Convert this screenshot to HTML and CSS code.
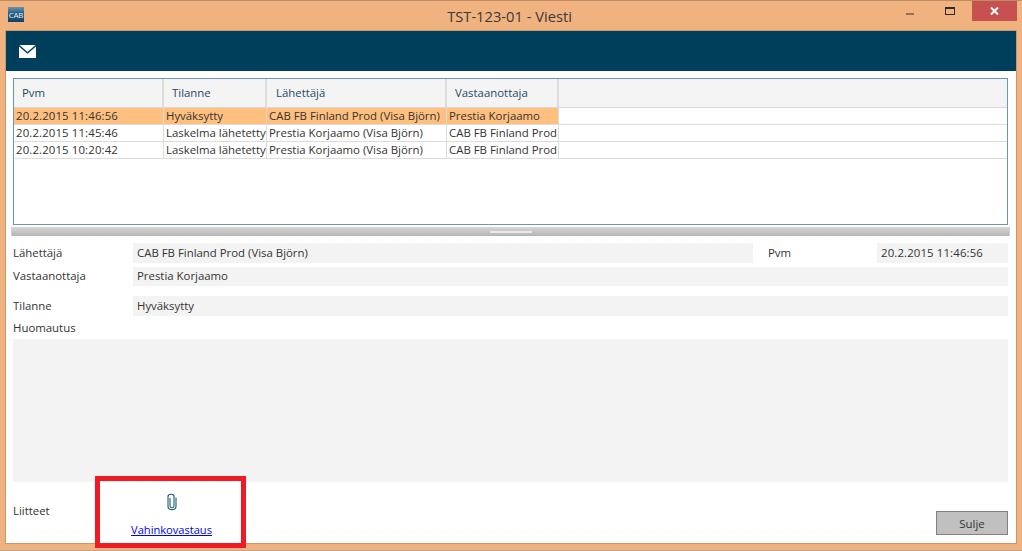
FILE: index.html
```html
<!DOCTYPE html>
<html lang="en">
<head>
  <meta charset="UTF-8">
  <title>TST-123-01 - Viesti</title>
  <link rel="stylesheet" href="styles.css">
</head>
<body>
  <div class="window">
    <div class="titlebar">
      <div class="logo">CAB</div>
      <div class="title">TST-123-01 - Viesti</div>
      <div class="controls">
        <div class="min"><span></span></div>
        <div class="max"><span></span></div>
        <div class="close">
          <svg width="9" height="8" viewBox="0 0 9 8"><path d="M1 0.5 L8 7.5 M8 0.5 L1 7.5" stroke="#fff" stroke-width="2"/></svg>
        </div>
      </div>
    </div>

    <div class="content">
      <div class="header">
        <svg width="17" height="13" viewBox="0 0 17 13">
          <path d="M0.5 0 H16.5 L8.5 7 Z" fill="#fff"/>
          <path d="M0 1.5 L8.5 8.8 L17 1.5 V13 H0 Z" fill="#fff"/>
        </svg>
      </div>

      <div class="grid">
        <div class="row head">
          <div class="col c1">Pvm</div>
          <div class="col c2">Tilanne</div>
          <div class="col c3">Lähettäjä</div>
          <div class="col c4">Vastaanottaja</div>
          <div class="col c5"></div>
        </div>
        <div class="row selected">
          <div class="col c1 stamp">20.2.2015 11:46:56</div>
          <div class="col c2">Hyväksytty</div>
          <div class="col c3">CAB FB Finland Prod (Visa Björn)</div>
          <div class="col c4">Prestia Korjaamo</div>
          <div class="col c5"></div>
        </div>
        <div class="row">
          <div class="col c1 stamp">20.2.2015 11:45:46</div>
          <div class="col c2">Laskelma lähetetty</div>
          <div class="col c3">Prestia Korjaamo (Visa Björn)</div>
          <div class="col c4">CAB FB Finland Prod</div>
          <div class="col c5"></div>
        </div>
        <div class="row">
          <div class="col c1 stamp">20.2.2015 10:20:42</div>
          <div class="col c2">Laskelma lähetetty</div>
          <div class="col c3">Prestia Korjaamo (Visa Björn)</div>
          <div class="col c4">CAB FB Finland Prod</div>
          <div class="col c5"></div>
        </div>
      </div>

      <div class="splitter"><span></span></div>

      <div class="form">
        <div class="line line-sender">
          <label>Lähettäjä</label>
          <div class="field grow">CAB FB Finland Prod (Visa Björn)</div>
          <label class="date-label">Pvm</label>
          <div class="field date stamp">20.2.2015 11:46:56</div>
        </div>
        <div class="line line-receiver">
          <label>Vastaanottaja</label>
          <div class="field grow">Prestia Korjaamo</div>
        </div>
        <div class="line line-status">
          <label>Tilanne</label>
          <div class="field grow">Hyväksytty</div>
        </div>
        <div class="note-label">Huomautus</div>
        <div class="note"></div>
        <div class="bottom">
          <label class="att-label">Liitteet</label>
          <div class="attachment">
            <svg width="10" height="18" viewBox="0 0 10 18" fill="none">
              <path d="M3 5 V13 C3 15.4 7 15.4 7 13 V3.4 C7 0.6 1 0.6 1 3.4 V13.2 C1 17.8 9 17.8 9 13.2 V4.5" stroke="#1f5a75" stroke-width="1.1"/>
            </svg>
            <a href="#">Vahinkovastaus</a>
          </div>
          <button class="close-btn">Sulje</button>
        </div>
      </div>
    </div>

    <div class="highlight"></div>
  </div>
</body>
</html>
```

FILE: styles.css
```css
/* window frame */
html, body {
  margin: 0;
  padding: 0;
}

body {
  font-family: "Open Sans", "Noto Sans", sans-serif;
  font-size: 11.4px;
  color: #333;
  overflow: hidden;
}

.window {
  position: relative;
  width: 1022px;
  height: 551px;
  box-sizing: border-box;
  padding: 0 6px 7px 6px;
  background: #f0b27f;
  border-top: 1px solid #bd8c66;
  border-bottom: 1px solid #c9a585;
  display: flex;
  flex-direction: column;
}

.titlebar {
  height: 30px;
  display: flex;
  align-items: flex-start;
  position: relative;
  flex: none;
}

.logo {
  width: 16px;
  height: 15px;
  margin: 6px 0 0 2px;
  background: linear-gradient(to bottom, #6d93ad, #2b6086 40%, #0f4468);
  color: #e6eef4;
  font-size: 8px;
  line-height: 15px;
  text-align: center;
  letter-spacing: -0.3px;
}

.title {
  position: absolute;
  left: 0;
  right: 3px;
  top: 5px;
  text-align: center;
  font-size: 14.7px;
  line-height: 20px;
  color: #3a3a3a;
}

.controls {
  margin-left: auto;
  margin-right: -1px;
  display: flex;
  align-items: flex-start;
}

.min {
  width: 26px;
  height: 20px;
  margin-right: 14px;
  display: flex;
  justify-content: center;
}

.min span {
  width: 8px;
  height: 2px;
  margin-top: 12px;
  background: #9a6f4e;
}

.max {
  width: 26px;
  height: 20px;
  margin-right: 9px;
  display: flex;
  justify-content: center;
}

.max span {
  box-sizing: border-box;
  width: 10px;
  height: 8px;
  margin-top: 6px;
  border: 1px solid #2b2b2b;
  border-top-width: 2px;
}

.close {
  width: 45px;
  height: 20px;
  background: #c75050;
  display: flex;
  align-items: center;
  justify-content: center;
}

.content {
  flex: 1;
  background: #fff;
  box-shadow: 0 0 0 1px #c9986f;
  display: flex;
  flex-direction: column;
  padding-bottom: 8px;
  box-sizing: border-box;
  min-height: 0;
}

.header {
  height: 40px;
  flex: none;
  background: #003f5c;
  display: flex;
  align-items: center;
  padding-left: 13px;
}

/* message list */
.grid {
  height: 147px;
  flex: none;
  box-sizing: border-box;
  margin: 7px 8px 0 7px;
  border: 1px solid #6f94b5;
  background: #fff;
}

.row {
  display: flex;
  height: 17px;
  line-height: 16px;
  box-sizing: border-box;
  border-bottom: 1px solid #dcdcdc;
  color: #333;
}

.row.head {
  height: 29px;
  line-height: 28px;
  background: #f4f4f4;
  color: #1f4a66;
  border-bottom: 1px solid #d8d8d8;
}

.selected .c1,
.selected .c2,
.selected .c3,
.selected .c4 {
  background: #ffc07f;
}

.col {
  box-sizing: border-box;
  padding-left: 2px;
  border-right: 1px solid #dcdcdc;
  white-space: nowrap;
  overflow: hidden;
}

.stamp {
  letter-spacing: 0.13px;
}

.head .col {
  padding-left: 8px;
  border-right: 2px solid #dcdcdc;
}

.head .c3 {
  padding-left: 9px;
}

.c1 { width: 150px; }
.c2 { width: 103px; }
.c3 { width: 180px; }
.c4 { width: 112px; }

.col.c5 {
  flex: 1;
  border-right: none;
}

.splitter {
  height: 9px;
  flex: none;
  margin: 2px 6px 0 5px;
  background: linear-gradient(to bottom, #d8d8d8, #b4b4b4);
  border: 1px solid #d0d0d0;
  border-width: 0 1px;
  display: flex;
  align-items: center;
  justify-content: center;
}

.splitter span {
  width: 42px;
  height: 2px;
  background: #e9e9e9;
}

/* details form */
.form {
  flex: 1;
  display: flex;
  flex-direction: column;
  padding: 7px 8px 0 7px;
  min-height: 0;
}

.line {
  display: flex;
  align-items: center;
}

.line label {
  width: 120px;
  flex: none;
  padding-bottom: 2px;
  box-sizing: border-box;
}

.line-sender {
  height: 20px;
}

.line-receiver {
  height: 19px;
  margin-top: 4px;
}

.line-status {
  height: 20px;
  margin-top: 10px;
}

.field {
  height: 100%;
  background: #f3f3f3;
  padding: 0 0 2px 4px;
  box-sizing: border-box;
  display: flex;
  align-items: center;
  white-space: nowrap;
}

.grow {
  flex: 1;
}

.line label.date-label {
  width: 124px;
  padding-left: 15px;
}

.date {
  width: 131px;
}

.note-label {
  height: 15px;
  line-height: 15px;
  margin-top: 4px;
}

.note {
  height: 143px;
  flex: none;
  margin-top: 4px;
  background: #f3f3f3;
}

.bottom {
  flex: 1;
  display: flex;
  align-items: flex-end;
  min-height: 0;
}

.att-label {
  width: 118px;
  margin-bottom: 17px;
  flex: none;
}

.attachment {
  width: 81px;
  display: flex;
  flex-direction: column;
  align-items: center;
  margin-bottom: -2px;
}

.attachment svg {
  margin-left: 0;
}

.attachment a {
  margin-top: 11px;
  color: #0000ee;
  font-size: 11.1px;
  white-space: nowrap;
}

.close-btn {
  margin-left: auto;
  width: 72px;
  height: 24px;
  background: #c0c0c0;
  border: 1px solid #808080;
  color: #333;
  font-family: inherit;
  font-size: 11.4px;
  padding: 0;
}

/* red annotation box */
.highlight {
  position: absolute;
  left: 95px;
  top: 475px;
  width: 151px;
  height: 72px;
  box-sizing: border-box;
  border: 5px solid #ed1c24;
}
```
